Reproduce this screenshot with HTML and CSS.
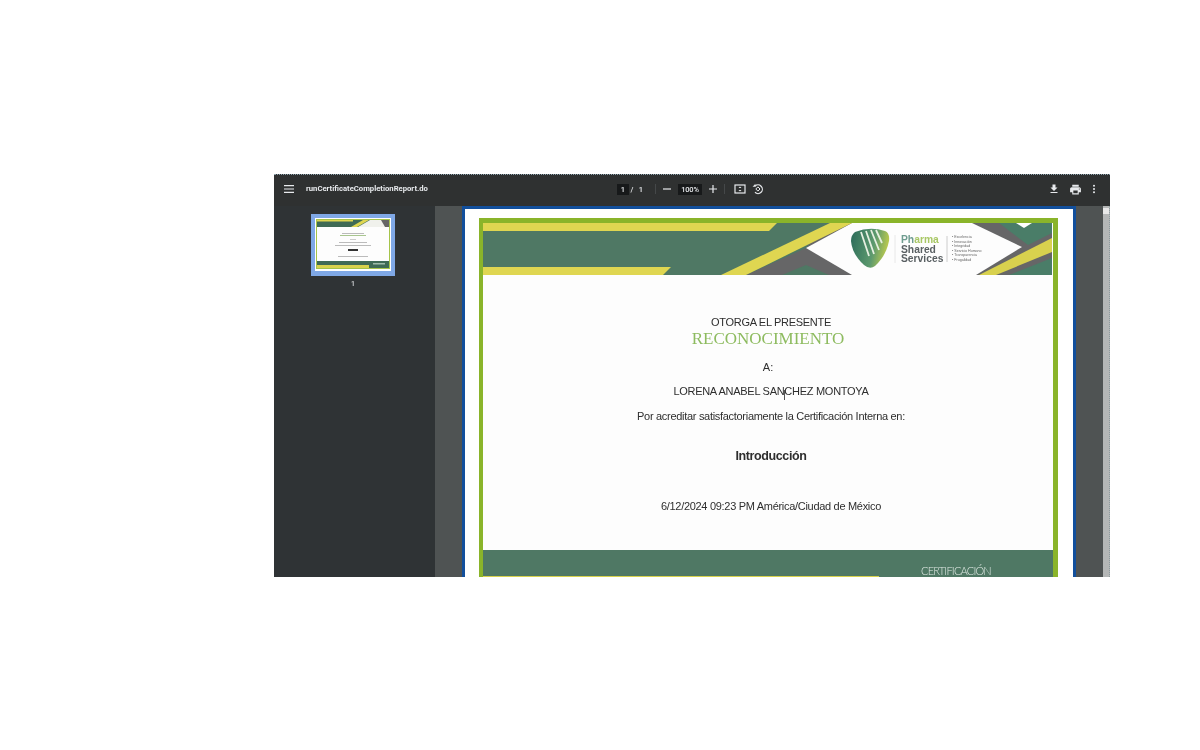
FILE: index.html
```html
<!DOCTYPE html>
<html lang="es">
<head>
<meta charset="utf-8">
<title>runCertificateCompletionReport.do</title>
<link rel="stylesheet" href="styles.css">
</head>
<body>
<div class="viewer">
  <header class="toolbar">
    <div class="tb-left">
      <svg class="ico-menu" width="12" height="10" viewBox="0 0 12 10"><path d="M1 1h10v1.200H1zM1 4.400h10v1.200H1zM1 7.800h10V9H1z" fill="#e8eaed"/></svg>
      <span class="doc-title">runCertificateCompletionReport.do</span>
    </div>
    <div class="tb-center">
      <span class="num-box page-box">1</span>
      <span class="pager">/</span>
      <span class="pager pager-total">1</span>
      <span class="sep"></span>
      <svg class="ico-minus" width="10" height="10" viewBox="0 0 10 10"><path d="M1 4.400h8v1.200H1z" fill="#e8eaed"/></svg>
      <span class="num-box zoom-box">100%</span>
      <svg class="ico-plus" width="10" height="10" viewBox="0 0 10 10"><path d="M1 4.400h3.400V1h1.200v3.400H9v1.200H5.600V9H4.400V5.600H1z" fill="#e8eaed"/></svg>
      <span class="sep sep-2"></span>
      <svg class="ico-fit" width="12" height="10" viewBox="0 0 12 10"><rect x="1" y="1" width="10" height="8" fill="none" stroke="#e8eaed" stroke-width="1.200"/><path d="M6 2.500 7.500 4h-3zM6 7.500 4.500 6h3z" fill="#e8eaed"/></svg>
      <svg class="ico-rotate" width="12" height="12" viewBox="0 0 12 12"><path d="M3 3.200A4.300 4.300 0 1 1 3 9.300" fill="none" stroke="#e8eaed" stroke-width="1.200"/><path d="M3.400.8v3H.6z" fill="#e8eaed"/><path d="M5.900 3.900 3.800 6l2.100 2.100L8 6z" fill="none" stroke="#e8eaed"/></svg>
    </div>
    <div class="tb-right">
      <svg class="ico-download" width="12" height="12" viewBox="0 0 24 24"><path d="M5 20h14v-2H5zM19 9h-4V3H9v6H5l7 7z" fill="#e8eaed"/></svg>
      <svg class="ico-print" width="13" height="13" viewBox="0 0 24 24"><path d="M19 8H5c-1.660 0-3 1.340-3 3v6h4v4h12v-4h4v-6c0-1.660-1.340-3-3-3zm-3 11H8v-5h8v5zm3-7c-.55 0-1-.45-1-1s.45-1 1-1 1 .45 1 1-.45 1-1 1zm-1-9H6v4h12V3z" fill="#e8eaed"/></svg>
      <svg class="ico-more" width="12" height="12" viewBox="0 0 12 12"><circle cx="6" cy="2.800" r="1" fill="#e8eaed"/><circle cx="6" cy="6" r="1" fill="#e8eaed"/><circle cx="6" cy="9.200" r="1" fill="#e8eaed"/></svg>
    </div>
  </header>
  <div class="workspace">
    <aside class="sidebar">
      <div class="thumb">
        <svg width="76" height="53" viewBox="0 0 76 53">
          <rect width="76" height="53" fill="#fff"/>
          <rect x="1.500" y="1.500" width="73" height="49" fill="#fdfdfd" stroke="#a5c44a"/>
          <rect x="2" y="2" width="72" height="7" fill="#3f6a55"/>
          <rect x="2" y="2" width="36" height="1.500" fill="#dfd651"/>
          <path d="M36 9 48 2h6L42 9z" fill="#dfd651"/>
          <path d="M43 9 55 2h19v7z" fill="#f0f1ec"/>
          <path d="M66 2h8v7h-4z" fill="#666"/>
          <rect x="27" y="15" width="22" height="1" fill="#bbb"/>
          <rect x="25" y="17" width="26" height="1" fill="#a9c690"/>
          <rect x="35" y="21" width="6" height="1" fill="#ccc"/>
          <rect x="24" y="24" width="28" height="1" fill="#bbb"/>
          <rect x="20" y="27" width="36" height="1" fill="#bbb"/>
          <rect x="33" y="31" width="10" height="2" fill="#333"/>
          <rect x="23" y="38" width="30" height="1" fill="#bbb"/>
          <rect x="2" y="43" width="72" height="7" fill="#3f6a55"/>
          <rect x="2" y="47" width="52" height="3" fill="#d8d24c"/>
          <rect x="58" y="45" width="12" height="1.500" fill="#9fbcaa"/>
        </svg>
      </div>
      <span class="thumb-num">1</span>
    </aside>
    <main class="stage">
      <article class="page">
        <div class="cert">
          <svg class="banner" width="569" height="52" viewBox="0 0 569 52">
            <defs>
              <linearGradient id="shield" x1="0" y1="0.300" x2="1" y2="0.500">
                <stop offset="0" stop-color="#2f6f5c"/>
                <stop offset="0.600" stop-color="#5d9a6e"/>
                <stop offset="1" stop-color="#c5cf4b"/>
              </linearGradient>
            </defs>
            <rect width="569" height="52" fill="#4f7864"/>
            <path d="M0 0H294L286 8H0z" fill="#dfd651"/>
            <path d="M0 44H188L180 52H0z" fill="#dfd651"/>
            <path d="M346 0H569V52H263L323 25z" fill="#666667"/>
            <path d="M299 52 323 42 346 52z" fill="#4f7864"/>
            <path d="M369 0H489L539 24 493 52H369L323 25z" fill="#fdfdfd"/>
            <path d="M516 0H569V10L545 22z" fill="#4a7d68"/>
            <path d="M533 0H549L541 5z" fill="#fff"/>
            <path d="M238 52 347 0H369L263 52z" fill="#dfd651"/>
            <path d="M496 52 569 15V29L513 52z" fill="#d8d14e"/>
            <path d="M526 52 569 35V52z" fill="#4a7d68"/>
            <path d="M372 9Q387 3 402 8Q407 10 406 18Q403 33 392 43Q387 47 381 42Q369 31 368 18Q368 12 372 9Z" fill="url(#shield)"/>
            <path d="M378 9 386 33M383 8 391 31M388 7 396 27M393 7 399 20" stroke="#e6efe0" stroke-width="1.800" fill="none"/>
            <line x1="412" y1="12" x2="412" y2="40" stroke="#e8e8e8"/>
            <text class="logo-word" x="418" y="20"><tspan class="logo-ph">Ph</tspan><tspan class="logo-arma">arma</tspan></text>
            <text class="logo-word" x="418" y="29.500">Shared</text>
            <text class="logo-word" x="418" y="38.700">Services</text>
            <line x1="464" y1="13" x2="464" y2="39" stroke="#ccc"/>
            <text class="logo-list" x="469" y="15">• Excelencia</text>
            <text class="logo-list" x="469" y="19.500">• Innovación</text>
            <text class="logo-list" x="469" y="24">• Integridad</text>
            <text class="logo-list" x="469" y="28.500">• Servicio Humano</text>
            <text class="logo-list" x="469" y="33">• Transparencia</text>
            <text class="logo-list" x="469" y="37.500">• Frugalidad</text>
          </svg>
          <div class="cert-body">
            <p class="line l-otorga">OTORGA EL PRESENTE</p>
            <p class="line l-recon">RECONOCIMIENTO</p>
            <p class="line l-a">A:</p>
            <p class="line l-name">LORENA ANABEL SANCHEZ MONTOYA</p>
            <p class="line l-por">Por acreditar satisfactoriamente la Certificación Interna en:</p>
            <p class="line l-intro">Introducción</p>
            <p class="line l-date">6/12/2024 09:23 PM América/Ciudad de México</p>
            <span class="cursor"></span>
          </div>
          <div class="cert-foot">
            <div class="foot-title">CERTIFICACIÓN</div>
            <div class="foot-bar"></div>
          </div>
        </div>
      </article>
    </main>
    <div class="scrollbar"><span class="scroll-arrow"></span></div>
  </div>
</div>
</body>
</html>
```
FILE: styles.css
```css
* { box-sizing: border-box; }
html, body { margin: 0; background: #fff; }
body { padding: 174px 0 0 274px; height: 750px; overflow: hidden; font-family: "Liberation Sans", Arial, sans-serif; }
p { margin: 0; }
svg { display: block; flex: none; }

.viewer { width: 836px; height: 403px; overflow: hidden; display: flex; flex-direction: column; background: #2f3233; filter: blur(0.6px); }

.toolbar { height: 32px; flex: none; display: grid; grid-template-columns: 1fr auto 1fr; align-items: center; border-top: 1px dotted #8fa3ad; padding-bottom: 3px; background: #2f3131; color: #e8eaed; }
.tb-left { display: flex; align-items: center; padding-left: 9px; }
.doc-title { margin-left: 11px; font: 700 7.700px/12px Roboto, "Liberation Sans", sans-serif; white-space: nowrap; }
.tb-center { display: flex; align-items: center; padding-right: 3px; font: 500 7.500px/11px Roboto, "Liberation Sans", sans-serif; }
.num-box { background: #17191a; text-align: center; height: 11px; display: block; }
.page-box { width: 12px; }
.pager { width: 6px; text-align: center; }
.pager-total { margin-left: 3px; }
.sep { width: 1px; height: 10px; background: #454849; margin: 0 6px 0 11px; }
.sep-2 { margin: 0 9px 0 6px; }
.zoom-box { width: 24px; margin: 0 6px; letter-spacing: -0.2px; }
.ico-rotate { margin-left: 6px; }
.tb-right { display: flex; align-items: center; justify-content: flex-end; padding-right: 10px; }
.ico-print { margin: 0 6px 0 9px; }

.workspace { flex: 1; min-height: 0; display: flex; }
.sidebar { width: 161px; flex: none; display: flex; flex-direction: column; align-items: center; padding: 8px 3px 0 0; background: #2f3335; }
.thumb { border: solid #7fa8e6; border-width: 4px 4px 5px 4px; }
.thumb-num { margin-top: 3px; font: 500 7px/10px Roboto, sans-serif; color: #d5d7d9; }

.stage { flex: 1; min-width: 0; background: #4f5353; padding: 0 0 0 27px; overflow: hidden; }
.page { width: 614px; border: 3px solid #124f9c; border-bottom: 0; background: #fff; padding: 9px 14px 0 14px; }
.cert { width: 579px; border: solid #8ab42a; border-width: 5px 5px 0 4px; background: #fdfdfd; }
.banner { background: #4f7864; }

.logo-word { font: 700 10.300px "Liberation Sans", sans-serif; fill: #5a6063; }
.logo-ph { fill: #6e9c8f; }
.logo-arma { fill: #a8c765; }
.logo-list { font: 3.600px "Liberation Sans", sans-serif; fill: #666; }

.cert-body { position: relative; padding: 40px 0 0 6px; height: 275px; text-align: center; color: #2e2e2e; }
.line { font-size: 11px; line-height: 14px; white-space: nowrap; }
.l-otorga { letter-spacing: -0.3px; }
.l-recon { font: 17px/20px "Liberation Serif", "Times New Roman", serif; color: #8dbb5f; margin-right: 6px; }
.l-a { margin-top: 11px; margin-right: 6px; }
.l-name { margin-top: 10px; letter-spacing: -0.28px; }
.l-por { margin-top: 11px; letter-spacing: -0.3px; }
.l-intro { margin-top: 24px; font-size: 12.500px; line-height: 18px; font-weight: 700; letter-spacing: -0.4px; }
.l-date { margin-top: 34px; letter-spacing: -0.3px; }
.cursor { position: absolute; left: 301px; top: 115px; width: 1px; height: 10px; background: #555; }

.cert-foot { background: #4f7864; height: 40px; }
.foot-title { height: 26px; padding: 14px 0 0 438px; font: 300 11px/14px Lato, "Open Sans", sans-serif; letter-spacing: -0.8px; color: #dfe9e3; white-space: nowrap; }
.foot-bar { width: 396px; height: 3px; background: #d8d24c; }

.scrollbar { width: 7px; flex: none; background: #b4b6b6; border-right: 1px dotted #8d9a9e; padding-top: 2px; }
.scroll-arrow { display: block; width: 6px; height: 6px; background: #e8e8e8; }
```
